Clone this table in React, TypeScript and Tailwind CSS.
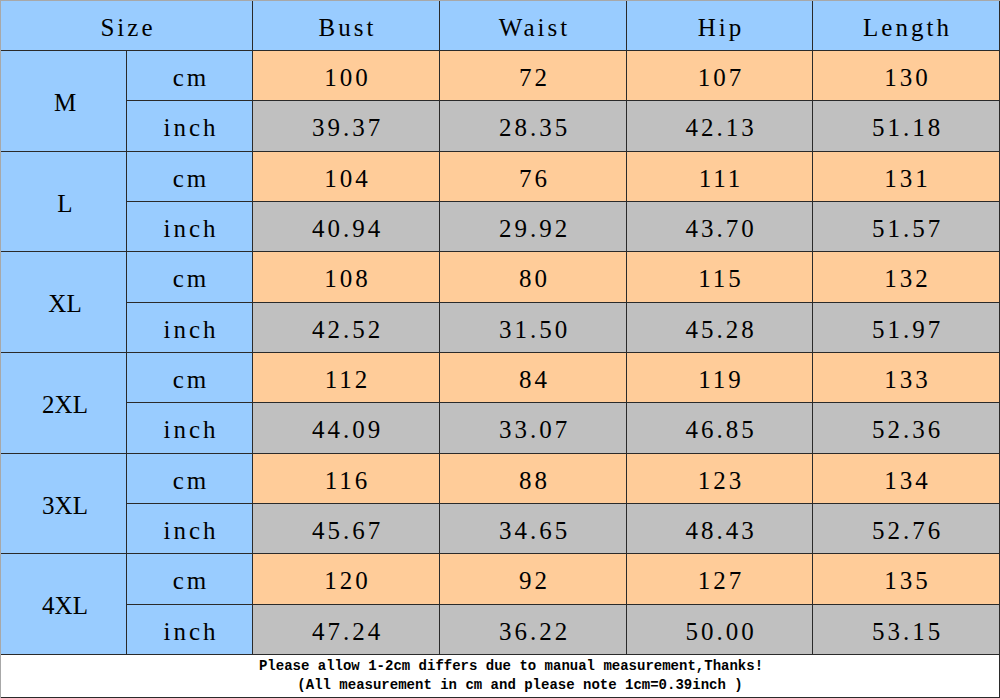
import React from "react";

type Row = { size: string; cm: string[]; inch: string[] };

const rows: Row[] = [
  { size: "M", cm: ["100", "72", "107", "130"], inch: ["39.37", "28.35", "42.13", "51.18"] },
  { size: "L", cm: ["104", "76", "111", "131"], inch: ["40.94", "29.92", "43.70", "51.57"] },
  { size: "XL", cm: ["108", "80", "115", "132"], inch: ["42.52", "31.50", "45.28", "51.97"] },
  { size: "2XL", cm: ["112", "84", "119", "133"], inch: ["44.09", "33.07", "46.85", "52.36"] },
  { size: "3XL", cm: ["116", "88", "123", "134"], inch: ["45.67", "34.65", "48.43", "52.76"] },
  { size: "4XL", cm: ["120", "92", "127", "135"], inch: ["47.24", "36.22", "50.00", "53.15"] },
];

const cell = "flex items-center justify-center pt-[4px] pl-[3px] text-black";

export default function App() {
  return (
    <div className="w-[1000px] h-[698px] bg-white">
      <div
        className="grid h-[698px] w-[1000px] gap-px bg-[#2a2a2a] border-t border-l border-[#a8a8a8] pr-px pb-px grid-cols-[125px_125px_186px_186px_185px_186px] grid-rows-[49px_repeat(12,minmax(0,1fr))_42px] text-[25px] tracking-[3px]"
        style={{ fontFamily: '"Liberation Serif", "DejaVu Serif", serif' }}
      >
        <div className={`${cell} col-span-2 bg-[#99ccff]`}>Size</div>
        {["Bust", "Waist", "Hip", "Length"].map((h) => (
          <div key={h} className={`${cell} bg-[#99ccff]`}>
            {h}
          </div>
        ))}

        {rows.map((r) => (
          <React.Fragment key={r.size}>
            <div className={`${cell} row-span-2 bg-[#99ccff] tracking-normal`}>{r.size}</div>
            <div className={`${cell} bg-[#99ccff]`}>cm</div>
            {r.cm.map((v, i) => (
              <div key={"c" + i} className={`${cell} bg-[#ffcc99]`}>
                {v}
              </div>
            ))}
            <div className={`${cell} bg-[#99ccff]`}>inch</div>
            {r.inch.map((v, i) => (
              <div key={"i" + i} className={`${cell} bg-[#c0c0c0]`}>
                {v}
              </div>
            ))}
          </React.Fragment>
        ))}

        <div
          className="col-span-6 flex flex-col items-center justify-center bg-white pl-[22px] text-[14px] leading-[19px] font-bold tracking-normal text-black"
          style={{ fontFamily: '"Liberation Mono", "DejaVu Sans Mono", monospace' }}
        >
          <div>Please allow 1-2cm differs due to manual measurement,Thanks!</div>
          <div className="pl-[18px]">(All measurement in cm and please note 1cm=0.39inch )</div>
        </div>
      </div>
    </div>
  );
}
